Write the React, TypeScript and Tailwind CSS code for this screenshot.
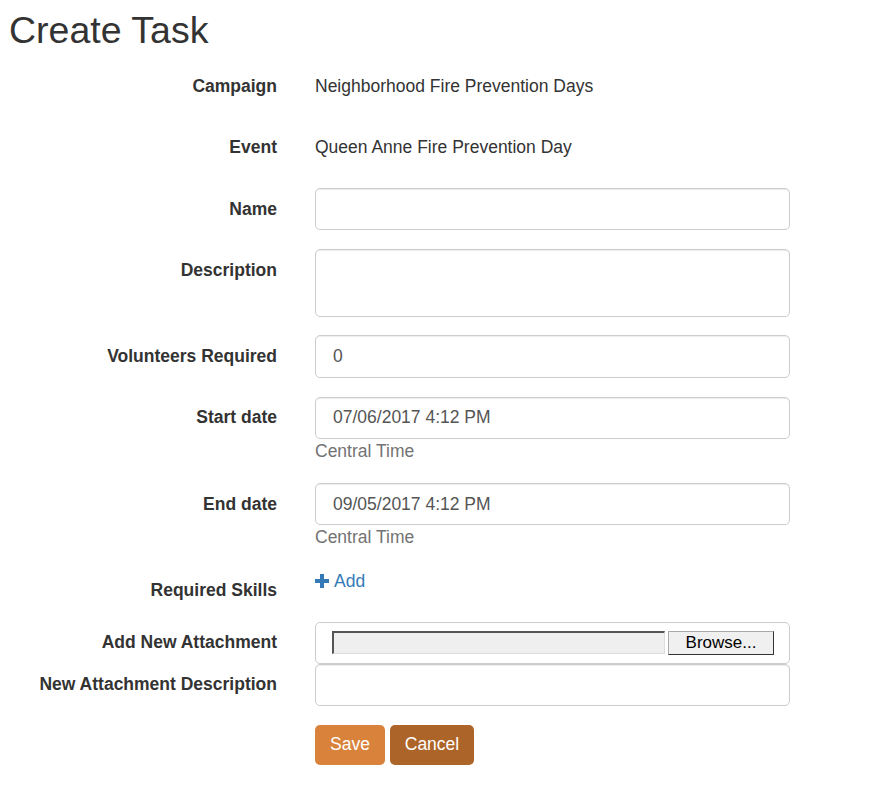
import React from "react"

const font = { fontFamily: '"Liberation Sans", Arial, sans-serif' }

function Row({
  label,
  children,
  last = false,
}: {
  label: string
  children: React.ReactNode
  last?: boolean
}) {
  return (
    <div className={`flex gap-x-[38px] ${last ? "" : "mb-[18.75px]"}`}>
      <label className="w-[277px] shrink-0 pt-[8.75px] text-right font-bold text-[#333] leading-[25px]">
        {label}
      </label>
      <div className="w-[475px]">{children}</div>
    </div>
  )
}

const inputCls =
  "block w-full h-[42.5px] px-[17px] rounded-[5px] border border-[#ccc] bg-white text-[#555] text-[17.5px] leading-[25px] shadow-[inset_0_1px_1px_rgba(0,0,0,0.075)] outline-none"

export default function App() {
  return (
    <div className="min-h-screen bg-white text-[17.5px] leading-[25px] text-[#333]" style={font}>
      <h1 className="pt-[10px] pl-[9px] mb-[14px] text-[37.5px] leading-[1.1] text-[#333]">Create Task</h1>

      <form onSubmit={(e) => e.preventDefault()}>
        <Row label="Campaign">
          <p className="pt-[8.75px] min-h-[42.5px]">Neighborhood Fire Prevention Days</p>
        </Row>
        <Row label="Event">
          <p className="pt-[8.75px] min-h-[42.5px]">Queen Anne Fire Prevention Day</p>
        </Row>
        <Row label="Name">
          <input type="text" className={inputCls} />
        </Row>
        <Row label="Description">
          <textarea className={`${inputCls} h-[67.5px] py-[7.5px] resize-none`} />
        </Row>
        <Row label="Volunteers Required">
          <input type="text" defaultValue="0" className={inputCls} />
        </Row>
        <Row label="Start date">
          <input type="text" defaultValue="07/06/2017 4:12 PM" className={inputCls} />
          <span className="block text-[#737373]">Central Time</span>
        </Row>
        <Row label="End date">
          <input type="text" defaultValue="09/05/2017 4:12 PM" className={inputCls} />
          <span className="block text-[#737373]">Central Time</span>
        </Row>
        <Row label="Required Skills">
          <a href="#" className="inline-flex items-center gap-[5px] text-[#337ab7]">
            <svg width="14" height="14" viewBox="0 0 14 14" className="mt-[-2px]">
              <path d="M5 0h4v5h5v4H9v5H5V9H0V5h5z" fill="#337ab7" />
            </svg>
            Add
          </a>
        </Row>
        <Row label="Add New Attachment" last>
          <div className="flex h-[42px] items-center rounded-[5px] border border-[#ccc] bg-white pl-[16px]">
            <div className="h-[23px] w-[333px] border-t-2 border-l-2 border-t-[#555] border-l-[#555] border-b border-r border-b-[#ddd] border-r-[#ddd] bg-[#efefef]" />
            <button
              type="button"
              className="ml-[3px] h-[24px] w-[106px] border border-[#333] border-t-[#aaa] border-l-[#aaa] bg-[#f0f0f0] text-[17px] leading-[20px] text-black"
            >
              Browse...
            </button>
          </div>
        </Row>
        <Row label="New Attachment Description">
          <input type="text" className={inputCls} />
        </Row>
        <div className="flex gap-[5px] pl-[315px]">
          <button type="submit" className="h-[40px] w-[70px] rounded-[5px] bg-[#d9823b] text-white">
            Save
          </button>
          <button type="button" className="h-[40px] w-[84px] rounded-[5px] bg-[#ad6428] text-white">
            Cancel
          </button>
        </div>
      </form>
    </div>
  )
}
